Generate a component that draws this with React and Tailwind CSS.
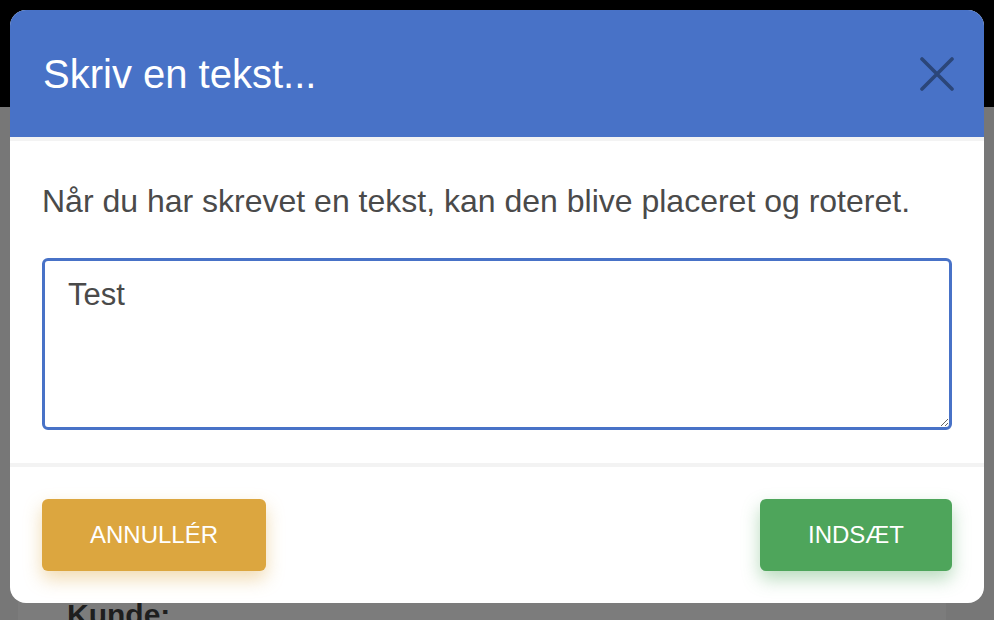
import React from "react";

export default function App() {
  const font = { fontFamily: '"Liberation Sans", Arial, Helvetica, sans-serif' };
  return (
    <div className="relative w-[994px] h-[620px] overflow-hidden bg-[#777777]" style={font}>
      {/* dimmed page behind */}
      <div className="h-[107px] bg-black" />
      <div className="ml-[18px] mr-[48px] h-[513px] bg-[#7c7c7c] flex flex-col justify-end">
        <div className="pl-[49px] text-[30px] font-bold text-[#1e1e1e] leading-none translate-y-[10px]">Kunde:</div>
      </div>

      {/* modal */}
      <div className="absolute left-[10px] top-[10px] w-[974px] rounded-2xl bg-white overflow-hidden flex flex-col">
        <div className="h-[127px] bg-[#4872c7] flex items-center justify-between pl-[33px] pr-[30px]">
          <h2 className="text-[40px] text-white leading-none font-normal">Skriv en tekst...</h2>
          <svg width="34" height="34" viewBox="0 0 34 34" fill="none" stroke="#2b4679" strokeWidth="3.6" strokeLinecap="round">
            <path d="M2 2 L32 32 M32 2 L2 32" />
          </svg>
        </div>
        <div className="border-t-4 border-[#f3f3f3] px-[32px] pt-[42px] pb-[33px] flex flex-col">
          <p className="text-[32px] leading-[36px] text-[#4a4a4a] mb-[39px]">
            Når du har skrevet en tekst, kan den blive placeret og roteret.
          </p>
          <textarea
            defaultValue="Test"
            className="h-[172px] w-full border-[3px] border-[#4872c7] rounded-md px-[23px] pt-[16px] text-[31px] leading-[36px] text-[#4a4a4a] outline-none"
            style={font}
          />
        </div>
        <div className="border-t-4 border-[#f3f3f3] px-[32px] pt-[32px] pb-[32px] flex items-center justify-between">
          <button className="w-[224px] h-[72px] rounded-md bg-[#dca63f] text-white text-[24px] uppercase shadow-[0_8px_18px_rgba(220,166,63,0.4)]">
            Annullér
          </button>
          <button className="w-[192px] h-[72px] rounded-md bg-[#4ea55b] text-white text-[24px] uppercase shadow-[0_8px_18px_rgba(78,165,91,0.4)]">
            Indsæt
          </button>
        </div>
      </div>
    </div>
  );
}
